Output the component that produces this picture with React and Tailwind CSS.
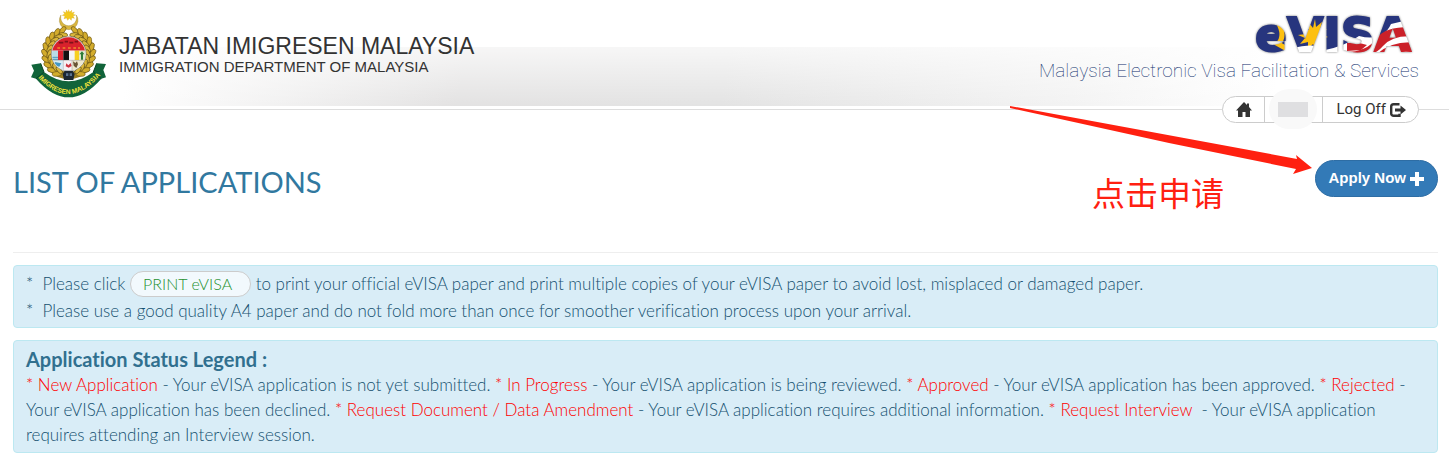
import { Fragment } from "react";

const LEGEND = [
    { name: "New Application", text: "Your eVISA application is not yet submitted." },
    { name: "In Progress", text: "Your eVISA application is being reviewed." },
    { name: "Approved", text: "Your eVISA application has been approved." },
    { name: "Rejected", text: "Your eVISA application has been declined." },
    {
        name: "Request Document / Data Amendment",
        text: "Your eVISA application requires additional information.",
    },
    {
        name: "Request Interview\u00a0",
        text: "Your eVISA application requires attending an Interview session.",
    },
];

// leaf positions along the two wreath branches, in degrees from the top
const LEAVES = [20, 35, 50, 65, 80, 95, 110, 125, 140, 155];

function WreathLeaf({ angle, side }) {
    return (
        <g transform={`translate(146 160) scale(${side} 1) rotate(${angle})`}>
            <ellipse cx="-6" cy="-71" rx="14" ry="7" fill="#d3ac2c" stroke="#6b5618" strokeWidth="2" transform="rotate(28 -6 -71)" />
            <ellipse cx="-4" cy="-58" rx="13" ry="6" fill="#d9b63a" stroke="#5c4a15" strokeWidth="2" transform="rotate(-24 -4 -58)" />
        </g>
    );
}

function Crest() {
    return (
        <svg viewBox="30 27 231 267" className="w-[77px] h-[89px] shrink-0" role="img" aria-label="Jabatan Imigresen Malaysia">
            <defs>
                <clipPath id="shield">
                    <circle cx="146" cy="162" r="50" />
                </clipPath>
                <path id="ribbon-line" d="M50 228 Q146 340 246 220" />
            </defs>
            <path d="M123 45 A28 28 0 1 0 169 45 A24 25 0 1 1 123 45 Z" fill="#d9b640" stroke="#8a7228" strokeWidth="1" />
            <polygon
                points="146,29 149,37 155,31 155,39 163,36 159,43 167,45 159,48 163,55 155,53 154,61 148,55 143,61 140,54 132,56 135,48 127,46 134,42 130,35 138,38 139,30 144,37"
                fill="#f3c91c"
                stroke="#d9a916"
            />
            <path d="M120 100 A66 66 0 1 0 172 100" fill="none" stroke="#9c7f20" strokeWidth="22" />
            {LEAVES.map((angle) => (
                <WreathLeaf key={`r${angle}`} angle={angle} side={1} />
            ))}
            {LEAVES.map((angle) => (
                <WreathLeaf key={`l${angle}`} angle={angle} side={-1} />
            ))}
            <circle cx="146" cy="162" r="52" fill="#fff" stroke="#8d8d80" strokeWidth="2" />
            <g clipPath="url(#shield)">
                <rect x="94" y="110" width="104" height="42" fill="#d9222c" />
                <path d="M116 128h14M134 125h10M148 128h12M164 125h10" stroke="#7f1119" strokeWidth="5" />
                <path d="M112 144h8M128 144h8M144 144h8M160 144h8M174 144h6" stroke="#f08b2d" strokeWidth="4" />
                <rect x="94" y="152" width="20" height="28" fill="#b9dbe6" />
                <path d="M96 172h18M96 178h18" stroke="#4c98bd" strokeWidth="3" />
                <rect x="114" y="152" width="16" height="30" fill="#de2330" />
                <rect x="130" y="152" width="17" height="30" fill="#111" />
                <rect x="147" y="152" width="17" height="30" fill="#f4f4f4" />
                <rect x="164" y="152" width="14" height="30" fill="#f7cf20" />
                <rect x="178" y="152" width="20" height="30" fill="#dfe8cb" />
                <path d="M186 154l7 9-4 0v16h-6v-16h-5z" fill="#2f7d3a" />
                <rect x="94" y="180" width="36" height="34" fill="#d7ecf4" />
                <path d="M104 186l20 4-6 10-14-3z" fill="#4297c4" />
                <rect x="130" y="180" width="26" height="34" fill="#f6f1f3" />
                <path d="M139 190l6 6 7-7 3 9-9 5-9-4z" fill="#cd3340" />
                <rect x="156" y="180" width="42" height="34" fill="#eee8cf" />
                <path d="M159 184l7 5 5-5 3 9-5 11-8-7z" fill="#695536" />
                <path d="M130 182v30M156 182v30M94 181h104" stroke="#777" strokeWidth="1" />
            </g>
            <path d="M134 212h24l6 10-4 18h-28l-4-18z" fill="#1c2733" />
            <path d="M138 220h7v8h-7zM149 220h7v8h-7z" fill="#5b7392" />
            <path d="M34 194 L62 190 L72 216 Q146 272 220 216 L230 190 L258 192 L250 210 L258 232 L244 236 Q146 348 48 236 L33 232 L42 212 Z" fill="#11643a" />
            <path d="M48 236 L72 216 L62 190 M244 236 L220 216 L230 190" fill="none" stroke="#0a4326" strokeWidth="3" />
            <text fontSize="20" fontWeight="700" fill="#f2e23c" className="font-['Liberation_Sans_Narrow','Liberation_Sans',sans-serif]" textAnchor="middle">
                <textPath href="#ribbon-line" startOffset="50%">
                    IMIGRESEN MALAYSIA
                </textPath>
            </text>
        </svg>
    );
}

function EvisaLogo() {
    return (
        <svg
            viewBox="0 0 164 40"
            className="w-[164px] h-10 shrink-0 overflow-visible drop-shadow-[0_0_1px_#777]"
            role="img"
            aria-label="eVISA"
        >
            <defs>
                <pattern id="flag" x="-2" y="-6" width="172" height="52" viewBox="-2 -6 172 52" patternUnits="userSpaceOnUse">
                    <rect x="-2" y="-6" width="172" height="52" fill="#27357e" />
                    <path d="M23 6 Q31 20 23 28 L34 34" fill="none" stroke="#fdc010" strokeWidth="5" />
                    <polygon
                        points="60,3 61,11 67,6 65,14 72,13 66,18 73,21 66,23 70,29 63,27 62,35 58,28 53,33 53,26 45,28 50,22 43,19 51,18 46,11 54,14 54,7 58,12"
                        fill="#fdc010"
                    />
                    <path d="M38 32 Q60 26 70 34 Q90 30 104 20 Q128 26 136 8 L170 0 V46 H38Z" fill="#fff" />
                    <path d="M90 36 Q112 36 122 22 Q132 8 170 12 V22 Q140 16 128 30 Q116 44 90 42Z" fill="#cb2129" />
                    <path d="M92 27 Q104 26 112 29 L106 34 L92 35Z M122 38 Q140 22 170 28 V38 Q142 32 128 42Z" fill="#cb2129" />
                </pattern>
            </defs>
            <text
                x="0"
                y="35"
                fontSize="47"
                fontWeight="700"
                fill="url(#flag)"
                stroke="url(#flag)"
                strokeWidth="2"
                className="font-['DejaVu_Sans',sans-serif]"
            >
                eVISA
            </text>
        </svg>
    );
}

function HomeIcon() {
    return (
        <svg viewBox="0 0 16 16" className="size-4" aria-hidden="true">
            <path d="M8 0l3 3V1.500h2V5l3 3.500h-2V15H9.500v-5h-3v5H2V8.500H0z" fill="#333" />
        </svg>
    );
}

function LogoutIcon() {
    return (
        <svg viewBox="0 0 16 14" className="w-4 h-[14px]" aria-hidden="true">
            <path d="M9.500 1.200H3.600A2.400 2.400 0 0 0 1.200 3.600v6.800a2.400 2.400 0 0 0 2.400 2.400h5.900v-2" fill="none" stroke="#333" strokeWidth="2.4" />
            <path d="M5 5.400h5.500V2.400L16 7l-5.500 4.600V8.600H5z" fill="#333" />
        </svg>
    );
}

function PlusIcon() {
    return (
        <svg viewBox="0 0 14 14" className="size-[14px]" aria-hidden="true">
            <path d="M5 0h4v5h5v4H9v5H5V9H0V5h5z" fill="#fff" />
        </svg>
    );
}

function Header() {
    return (
        <header className="flex justify-between h-[110px] border-b border-[#ddd] px-[30px] bg-[linear-gradient(to_bottom,#ffffffb3,#ffffff00),linear-gradient(100deg,#fff_9%,#e3e2e2_32%,#e3e3e3_50%,#f3f3f3_74%,#fff_88%)] bg-no-repeat bg-[length:100%_59px] bg-[position:0_47px]">
            <div className="flex gap-3 pt-[9px]">
                <Crest />
                <div className="pt-6 text-[#333] font-normal font-['Liberation_Sans',Arial,sans-serif]">
                    <div className="text-[23px] leading-[26px]">JABATAN IMIGRESEN MALAYSIA</div>
                    <div className="text-[15px] leading-4">IMMIGRATION DEPARTMENT OF MALAYSIA</div>
                </div>
            </div>
            <div className="flex flex-col items-end pt-4">
                <EvisaLogo />
                <div className="text-[19px] leading-[30px] font-thin text-[#0b2c6b] font-['Roboto',sans-serif]">
                    Malaysia Electronic Visa Facilitation &amp; Services
                </div>
                <nav className="mt-[10px] flex h-[27px] shrink-0 rounded-full border border-[#ccc] bg-white text-[#333]">
                    <button type="button" aria-label="Home" className="w-[42px] flex items-center justify-center border-r border-[#ccc]">
                        <HomeIcon />
                    </button>
                    <button type="button" aria-label="Account" className="w-[58px] relative border-r border-[#ccc]">
                        <span className="absolute -top-2 left-1 w-12 h-10 rounded-full bg-[#f9f9f9] flex items-center justify-center">
                            <span className="w-[30px] h-[15px] bg-[#dfdfe1]" />
                        </span>
                    </button>
                    <button type="button" className="pl-[13px] pr-3 flex items-center gap-1 text-[15px] font-normal font-['Roboto',sans-serif]">
                        Log Off
                        <LogoutIcon />
                    </button>
                </nav>
            </div>
        </header>
    );
}

function Alert({ children, className }) {
    return (
        <div className={`rounded border border-[#bce8f1] bg-[#d9edf7] px-3 text-[17px] text-[#14506f] ${className}`}>
            {children}
        </div>
    );
}

function Annotation() {
    return (
        <div className="absolute top-[105px] right-[136px] w-[304px] pointer-events-none">
            <svg viewBox="0 0 304 72" className="w-[304px] h-[72px]" aria-hidden="true">
                <polygon points="1,1 110,21 288,54 287,50 303,63 284,69 287,64 160,38 1,3" fill="#ff2010" />
            </svg>
            <div className="pl-[83px] -mt-1 text-[33px] leading-[38px] font-normal text-[#ff2010] font-['Noto_Sans_CJK_SC',sans-serif]">
                点击申请
            </div>
        </div>
    );
}

export default function App() {
    return (
        <div className="relative bg-white font-light font-['Lato',sans-serif] [font-variant-ligatures:none]">
            <Header />
            <main className="pl-[13px] pr-[11px] pb-[6px]">
                <div className="flex items-start justify-between h-[142px] pt-[50px]">
                    <h1 className="text-[29px] leading-[44px] font-normal text-[#31789f]">LIST OF APPLICATIONS</h1>
                    <button
                        type="button"
                        className="h-[37px] px-[13px] rounded-full border border-[#2e6da4] bg-[#337ab7] text-white text-[15px] font-bold flex items-center gap-1 font-['Liberation_Sans',Arial,sans-serif]"
                    >
                        Apply Now
                        <PlusIcon />
                    </button>
                </div>
                <hr className="border-[#eee] mb-3" />
                <Alert className="pt-[5px] pb-1">
                    <ul>
                        <li className="flex items-center h-[26px] leading-[26px] whitespace-pre">
                            <span>*{"  "}Please click </span>
                            <button type="button" className="h-[26px] w-[121px] pl-3 text-left text-base rounded-full border border-[#ccc] bg-[#f2f9fd] text-[#1f9130] font-light">
                                PRINT eVISA
                            </button>
                            <span> to print your official eVISA paper and print multiple copies of your eVISA paper to avoid lost, misplaced or damaged paper.</span>
                        </li>
                        <li className="h-[26px] leading-[28px] whitespace-pre">
                            *{"  "}Please use a good quality A4 paper and do not fold more than once for smoother verification process upon your arrival.
                        </li>
                    </ul>
                </Alert>
                <Alert className="mt-3 pt-[5px] pb-[5px]">
                    <h2 className="text-xl leading-[26px] font-bold text-[#31708f]">Application Status Legend :</h2>
                    <p className="leading-[25px]">
                        {LEGEND.map(({ name, text }) => (
                            <Fragment key={name}>
                                <span className="text-[#f00]">* {name}</span> - {text}{" "}
                            </Fragment>
                        ))}
                    </p>
                </Alert>
            </main>
            <Annotation />
        </div>
    );
}
